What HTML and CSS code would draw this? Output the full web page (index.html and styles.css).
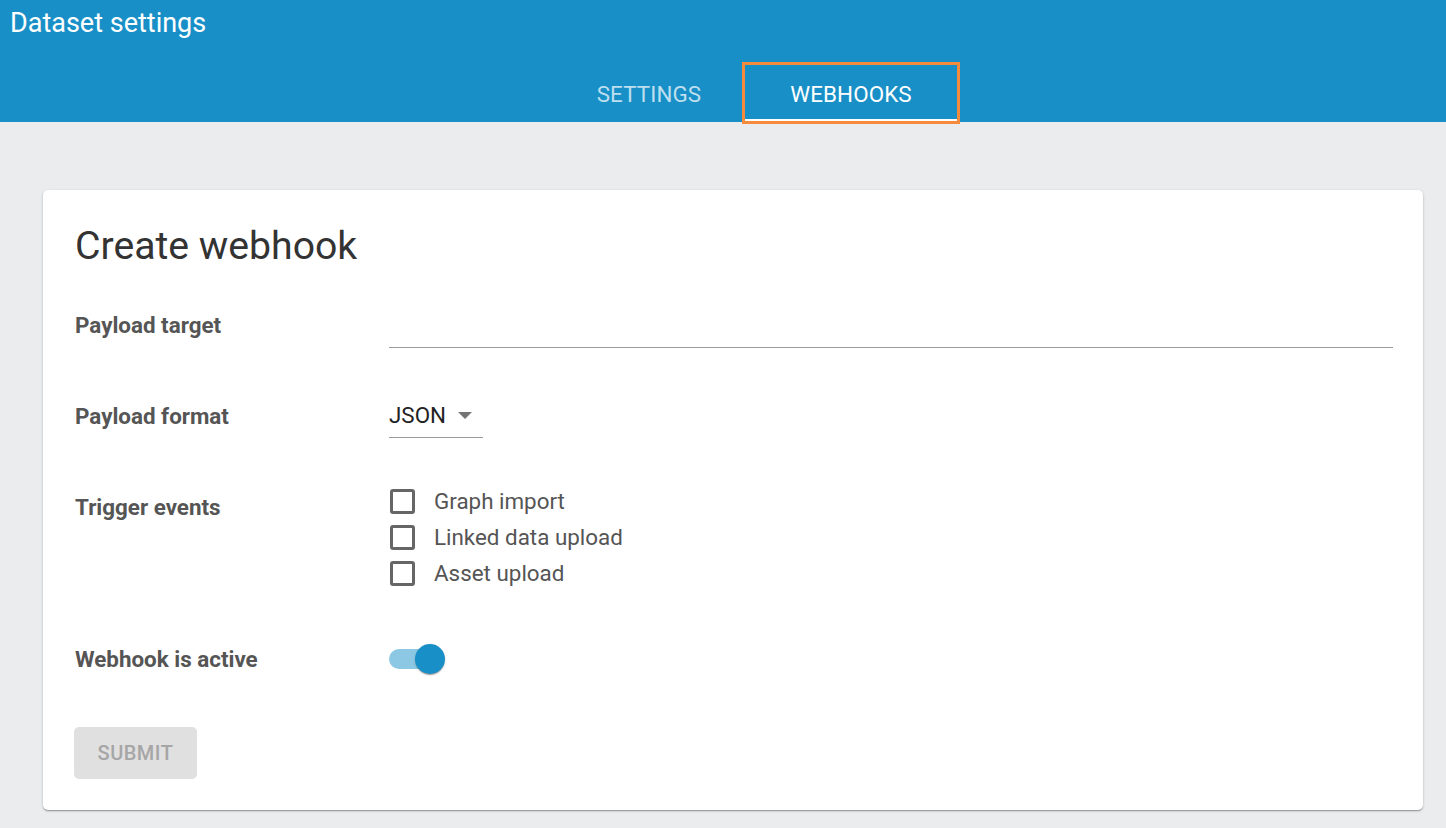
FILE: index.html
```html
<!DOCTYPE html>
<html lang="en">
<head>
<meta charset="utf-8">
<title>Dataset settings</title>
<link rel="stylesheet" href="styles.css">
</head>
<body>
<header class="appbar">
  <h1 class="appbar-title">Dataset settings</h1>
  <nav class="tabs">
    <div class="tab">SETTINGS</div>
    <div class="tab tab-active">WEBHOOKS<span class="tab-indicator"></span></div>
  </nav>
</header>
<main class="content">
  <section class="card">
    <h2 class="card-title">Create webhook</h2>
    <div class="form">
      <div class="row row-target">
        <div class="label label-target">Payload target</div>
        <div class="text-input"></div>
      </div>
      <div class="row row-format">
        <div class="label label-format">Payload format</div>
        <div class="select">
          <span class="select-value">JSON</span>
          <span class="select-arrow"></span>
        </div>
      </div>
      <div class="row row-events">
        <div class="label label-events">Trigger events</div>
        <div class="checks">
          <label class="check"><span class="check-box"></span><span class="check-text">Graph import</span></label>
          <label class="check"><span class="check-box"></span><span class="check-text">Linked data upload</span></label>
          <label class="check"><span class="check-box"></span><span class="check-text">Asset upload</span></label>
        </div>
      </div>
      <div class="row row-active">
        <div class="label label-active">Webhook is active</div>
        <div class="switch">
          <span class="switch-track"></span>
          <span class="switch-thumb"></span>
        </div>
      </div>
    </div>
    <button class="submit" type="button" disabled>SUBMIT</button>
  </section>
</main>
</body>
</html>
```
FILE: styles.css
```css
* { box-sizing: border-box; }

html, body {
  margin: 0;
  padding: 0;
}

body {
  background: #ebecee;
  font-family: Roboto, "Liberation Sans", Arial, sans-serif;
  color: #333;
  min-height: 828px;
}

.appbar {
  background: #1890c7;
  height: 122px;
  display: flex;
  flex-direction: column;
}

.appbar-title {
  margin: 0;
  padding: 6px 10px 0;
  font-size: 27px;
  line-height: 34px;
  font-weight: 400;
  color: #fff;
}

.tabs {
  display: flex;
  margin-top: 25px;
  padding-left: 548px;
}

.tab {
  position: relative;
  width: 202px;
  height: 56px;
  display: flex;
  align-items: center;
  justify-content: center;
  padding-top: 2px;
  font-size: 22.4px;
  letter-spacing: 0.1px;
  color: rgba(255, 255, 255, 0.72);
}

.tab-active {
  width: 212px;
  margin-left: -5px;
  color: #fff;
  outline: 3px solid #f58b3c;
}

.tab-indicator {
  position: absolute;
  left: 0;
  right: 0;
  bottom: 0;
  height: 2px;
  background: #fff;
}

.content {
  padding: 68px 23px 18px 43px;
}

.card {
  background: #fff;
  border-radius: 5px;
  box-shadow: 0 1px 3px rgba(0,0,0,0.2), 0 1px 1px rgba(0,0,0,0.14), 0 2px 1px -1px rgba(0,0,0,0.12);
  padding: 32px 30px 31px 32px;
}

.card-title {
  margin: 0;
  font-size: 39.2px;
  line-height: 48px;
  font-weight: 400;
  color: #333;
}

.form {
  display: flex;
  flex-direction: column;
}

.row {
  display: grid;
  grid-template-columns: 314px 1fr;
  align-items: start;
}

.label {
  font-size: 22.4px;
  line-height: 26px;
  font-weight: 700;
  color: #555;
}

.row-target { margin-top: 30px; }
.label-target { padding-top: 12px; }

.text-input {
  height: 48px;
  border-bottom: 1px solid #9a9a9a;
}

.row-format { margin-top: 48px; }
.label-format { padding-top: 7px; }

.select {
  width: 94px;
  display: flex;
  align-items: center;
  justify-content: space-between;
  padding: 7px 11px 10px 0;
  border-bottom: 1px solid #9a9a9a;
}

.select-value {
  font-size: 22.4px;
  line-height: 24px;
  color: #222;
}

.select-arrow {
  width: 0;
  height: 0;
  border-left: 7px solid transparent;
  border-right: 7px solid transparent;
  border-top: 7px solid #757575;
  margin-top: 1px;
}

.row-events { margin-top: 45px; }
.label-events { padding-top: 11px; }

.checks {
  display: flex;
  flex-direction: column;
}

.check {
  height: 36px;
  display: flex;
  align-items: center;
}

.check-box {
  width: 25px;
  height: 25px;
  margin-left: 1px;
  border: 3px solid #666;
  border-radius: 3px;
}

.check-text {
  margin-left: 19px;
  font-size: 22.4px;
  line-height: 26px;
  color: #555;
}

.row-active { margin-top: 48px; }
.label-active { padding-top: 7px; }

.switch {
  position: relative;
  width: 56px;
  height: 40px;
  display: flex;
  align-items: center;
}

.switch-track {
  width: 49px;
  height: 20px;
  border-radius: 10px;
  background: #8cc8e4;
}

.switch-thumb {
  position: absolute;
  left: 26px;
  top: 5px;
  width: 30px;
  height: 30px;
  border-radius: 50%;
  background: #1890c7;
  box-shadow: 0 2px 1px -1px rgba(0,0,0,0.2), 0 1px 1px rgba(0,0,0,0.14), 0 1px 3px rgba(0,0,0,0.12);
}

.submit {
  margin-top: 48px;
  margin-left: -1px;
  height: 52px;
  width: 123px;
  border: none;
  border-radius: 5px;
  background: #e0e0e0;
  color: #a6a6a6;
  font-family: Roboto, "Liberation Sans", Arial, sans-serif;
  font-size: 20px;
  font-weight: 500;
  letter-spacing: 0.5px;
  padding: 0;
}
```
